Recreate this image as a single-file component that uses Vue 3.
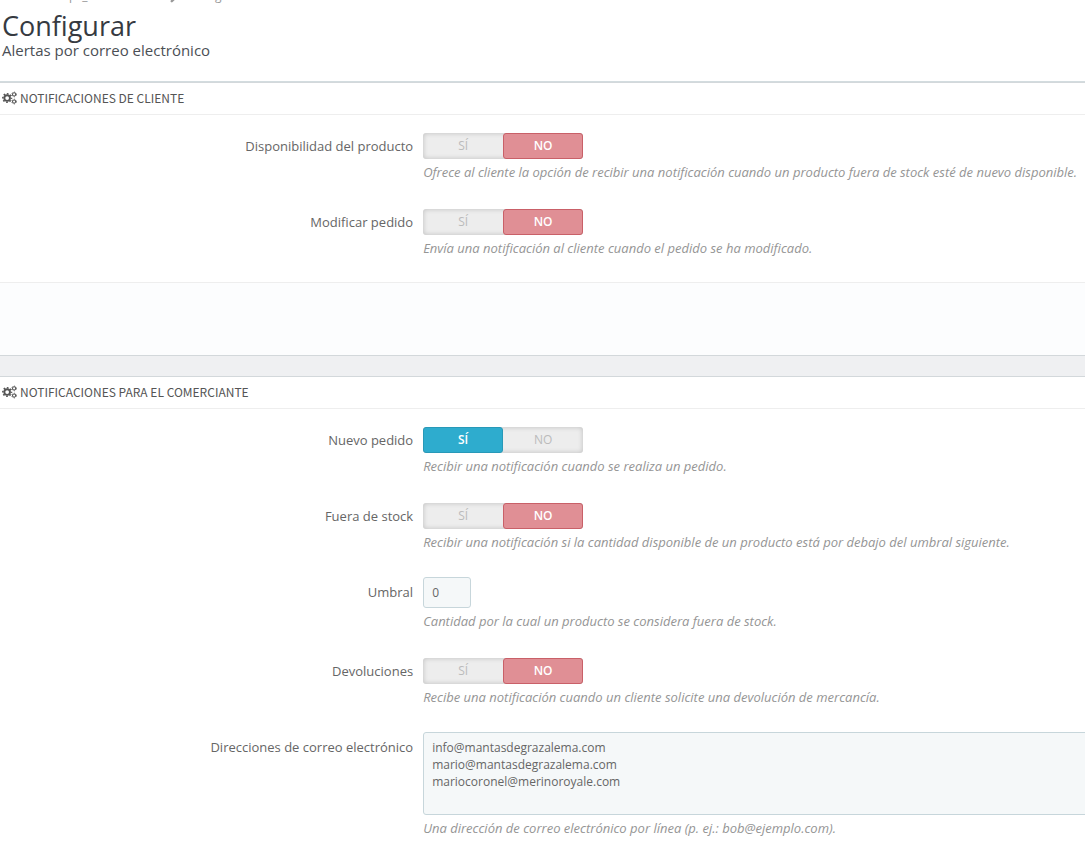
<script setup>
import { reactive } from 'vue'

const panels = reactive([
  {
    title: 'Notificaciones de cliente',
    footer: true,
    fields: [
      { id: 'availability', type: 'switch', label: 'Disponibilidad del producto', value: false, help: 'Ofrece al cliente la opción de recibir una notificación cuando un producto fuera de stock esté de nuevo disponible.' },
      { id: 'edit', type: 'switch', label: 'Modificar pedido', value: false, help: 'Envía una notificación al cliente cuando el pedido se ha modificado.' },
    ],
  },
  {
    title: 'Notificaciones para el comerciante',
    footer: false,
    fields: [
      { id: 'order', type: 'switch', label: 'Nuevo pedido', value: true, help: 'Recibir una notificación cuando se realiza un pedido.' },
      { id: 'stock', type: 'switch', label: 'Fuera de stock', value: false, help: 'Recibir una notificación si la cantidad disponible de un producto está por debajo del umbral siguiente.' },
      { id: 'threshold', type: 'text', label: 'Umbral', value: '0', help: 'Cantidad por la cual un producto se considera fuera de stock.' },
      { id: 'returns', type: 'switch', label: 'Devoluciones', value: false, help: 'Recibe una notificación cuando un cliente solicite una devolución de mercancía.' },
      { id: 'emails', type: 'area', label: 'Direcciones de correo electrónico', value: 'info@mantasdegrazalema.com\nmario@mantasdegrazalema.com\nmariocoronel@merinoroyale.com', help: 'Una dirección de correo electrónico por línea (p. ej.: bob@ejemplo.com).' },
    ],
  },
])
</script>

<template>
  <div class="page">
    <header class="head">
      <nav class="crumbs">
        <span>Módulos</span><span>/</span><span>ps_emailalerts</span><span>/</span>
        <span class="current">
          <svg class="wrench" viewBox="0 0 12 12" aria-hidden="true"><path d="M1.8 10.2 7 5" stroke="currentColor" stroke-width="2.4" stroke-linecap="round" /><path d="M11 3.2A2.6 2.6 0 1 1 8.6 1" fill="none" stroke="currentColor" stroke-width="1.8" /></svg>
          Configurar
        </span>
      </nav>
      <h1>Configurar</h1>
      <p class="sub">Alertas por correo electrónico</p>
    </header>
    <section v-for="p in panels" :key="p.title" class="panel">
      <h2>
        <svg class="cogs" viewBox="0 0 16 14" aria-hidden="true">
          <g fill="none" stroke="currentColor">
            <circle cx="5.5" cy="7" r="3" stroke-width="2" />
            <circle cx="5.5" cy="7" r="4.6" stroke-width="1.7" stroke-dasharray="1.8 1.81" stroke-dashoffset="0.9" />
            <circle cx="12.9" cy="3.2" r="1.7" stroke-width="1.1" />
            <circle cx="12.9" cy="3.2" r="2.5" stroke-width="0.9" stroke-dasharray="1.2 1.42" />
            <circle cx="12.9" cy="10.8" r="1.7" stroke-width="1.1" />
            <circle cx="12.9" cy="10.8" r="2.5" stroke-width="0.9" stroke-dasharray="1.2 1.42" />
          </g>
        </svg>
        {{ p.title }}
      </h2>
      <div class="body">
        <div v-for="f in p.fields" :key="f.id" class="row">
          <span v-if="f.type === 'switch'" :id="f.id + '-label'" class="label">{{ f.label }}</span>
          <label v-else :for="f.id" class="label">{{ f.label }}</label>
          <div class="control">
            <div v-if="f.type === 'switch'" class="switch" role="radiogroup" :aria-labelledby="f.id + '-label'">
              <label class="option yes" :class="{ on: f.value }"><input v-model="f.value" type="radio" :name="f.id" :value="true">SÍ</label>
              <label class="option no" :class="{ on: !f.value }"><input v-model="f.value" type="radio" :name="f.id" :value="false">NO</label>
            </div>
            <input v-else-if="f.type === 'text'" :id="f.id" v-model="f.value" class="field short" type="text">
            <textarea v-else :id="f.id" v-model="f.value" class="field area" spellcheck="false"></textarea>
            <p class="help">{{ f.help }}</p>
          </div>
        </div>
      </div>
      <footer v-if="p.footer" class="foot"></footer>
    </section>
  </div>
</template>

<style>
body {
  margin: 0;
  background: #eff0f2;
  overflow: hidden;
}
</style>

<style scoped>
.page {
  font: 13px/17px "Open Sans", sans-serif;
  color: #666;
}
.head {
  padding-bottom: 22px;
  background: #fff;
  border-bottom: 1px solid #d3dcdf;
  color: #363a41;
}
.crumbs {
  display: flex;
  gap: 8px;
  margin-top: -12px;
  font-size: 12px;
  line-height: 16px;
  color: #999;
}
.current {
  display: flex;
  align-items: flex-end;
  gap: 4px;
}
.wrench {
  width: 12px;
  height: 14px;
}
h1 {
  margin: 6px 0 0;
  padding-left: 2px;
  font-size: 27px;
  line-height: 32px;
  font-weight: 400;
}
.sub {
  margin: 0;
  padding-left: 2px;
  font-size: 15px;
  line-height: 17px;
  color: #4b4f55;
}
.panel {
  margin-bottom: 20px;
  background: #fff;
  border-top: 1px solid #d3d8db;
  border-bottom: 1px solid #d3d8db;
}
h2 {
  display: flex;
  align-items: center;
  gap: 3px;
  height: 29px;
  margin: 0;
  padding: 0 0 2px 2px;
  border-bottom: 1px solid #eee;
  font: 400 12px/29px "Ubuntu Condensed", "Noto Sans CJK SC", sans-serif;
  text-transform: uppercase;
  color: #555;
}
.cogs {
  width: 15px;
  height: 14px;
}
.body {
  display: grid;
  gap: 15px;
  padding: 16px 0 14px;
}
.row {
  display: grid;
  grid-template-columns: 39% minmax(0, 1fr);
}
.label {
  padding: 7px 10px 0 0;
  text-align: right;
}
.switch {
  display: flex;
  width: 160px;
  height: 26px;
  margin-top: 2px;
  border-radius: 3px;
  background: #ededed;
  box-shadow: inset 0 0 4px 1px rgba(0, 0, 0, 0.15);
}
.option {
  flex: 1;
  box-sizing: border-box;
  border: 1px solid transparent;
  border-radius: 3px;
  font-size: 12px;
  line-height: 24px;
  text-align: center;
  color: #bbb;
}
.option input {
  position: absolute;
  opacity: 0;
  margin: 0;
}
.option.on {
  font-weight: 600;
  color: #fff;
}
.yes.on {
  background: #2eacce;
  border-color: #2899b8;
}
.no.on {
  background: #e08f95;
  border-color: #c96068;
}
.help {
  margin: 4px 0 11px;
  font-size: 13px;
  line-height: 18px;
  font-style: italic;
  color: #959595;
}
.field {
  display: block;
  box-sizing: border-box;
  border: 1px solid #c7d6db;
  border-radius: 3px;
  background: #f5f8f9;
  font-family: inherit;
  font-size: 12px;
  line-height: 17px;
  color: #666;
  padding: 6px 8px;
}
.short {
  width: 48px;
  height: 31px;
}
.area {
  width: calc(100% + 10px);
  height: 83px;
  resize: none;
}
.foot {
  height: 72px;
  background: #fcfdfe;
  border-top: 1px solid #eee;
}
</style>
